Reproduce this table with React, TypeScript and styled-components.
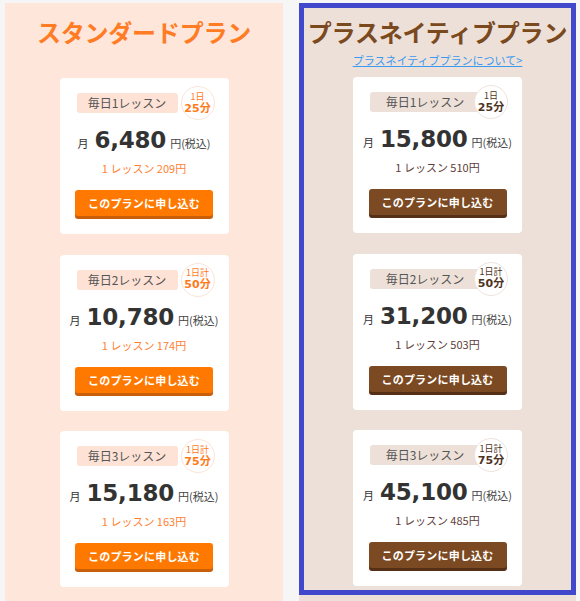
import React from "react";
import styled, { createGlobalStyle } from "styled-components";

const Global = createGlobalStyle`
  html, body { margin: 0; padding: 0; background: #f6f6f6; }
  body { font-family: "Noto Sans CJK JP", sans-serif; }
`;

type Variant = "std" | "plus";

const theme = {
  std: {
    panel: "#ffe6da",
    title: "#ff7b24",
    pill: "#fde2d5",
    ring: "#fbe4d9",
    badgeText: "#ff7a1a",
    perLesson: "#ff7f33",
    btn: "#ff7800",
    btnShadow: "#c95f0b",
  },
  plus: {
    panel: "#ede0d8",
    title: "#7a4a1e",
    pill: "#ede0d8",
    ring: "#eee3dd",
    badgeText: "#4f3322",
    perLesson: "#5e3d3a",
    btn: "#7b4a23",
    btnShadow: "#552f16",
  },
};

const Page = styled.div`
  display: flex;
  align-items: stretch;
  min-height: 100vh;
  box-sizing: border-box;
  padding: 3px 4px 0 5px;
  gap: 16px;
`;

const Column = styled.section<{ $v: Variant }>`
  width: ${(p) => (p.$v === "std" ? "278px" : "277px")};
  background: ${(p) => theme[p.$v].panel};
  display: flex;
  flex-direction: column;
`;

const Frame = styled.div`
  border: 5px solid #4148cc;
  padding: 7px 0 4px;
  display: flex;
  flex-direction: column;
  align-items: center;
`;

const Inner = styled.div`
  padding: 12px 0 0;
  display: flex;
  flex-direction: column;
  align-items: center;
`;

const Title = styled.h2<{ $v: Variant }>`
  margin: 0;
  font-family: "Noto Sans CJK JP", sans-serif;
  font-weight: 700;
  font-size: 24px;
  line-height: 34px;
  color: ${(p) => theme[p.$v].title};
  text-align: center;
  letter-spacing: -0.2px;
`;

const AboutLink = styled.a`
  font-family: "Noto Sans CJK JP", sans-serif;
  font-size: 11px;
  line-height: 15px;
  color: #3a9af0;
  text-decoration: underline;
  margin: 4px 0 9px;
`;

const CardList = styled.div<{ $top: number }>`
  display: flex;
  flex-direction: column;
  gap: 20.5px;
  margin-top: ${(p) => p.$top}px;
`;

const Card = styled.div`
  width: 169px;
  height: 156px;
  box-sizing: border-box;
  background: #fff;
  border-radius: 4px;
  padding-top: 15px;
  display: flex;
  flex-direction: column;
  align-items: center;
`;

const BadgeRow = styled.div`
  position: relative;
  align-self: flex-start;
  margin-left: 17px;
  width: 138px;
  height: 20px;
`;

const Pill = styled.div<{ $v: Variant; $w: number }>`
  width: ${(p) => p.$w}px;
  height: 20px;
  border-radius: 3px;
  background: ${(p) => theme[p.$v].pill};
  color: #555;
  font-size: 12px;
  line-height: 20px;
  text-align: center;
`;

const Circle = styled.div<{ $v: Variant }>`
  position: absolute;
  right: 0;
  top: 50%;
  transform: translateY(-50%);
  width: 34px;
  height: 34px;
  box-sizing: border-box;
  border-radius: 50%;
  background: #fff;
  border: 1px solid ${(p) => theme[p.$v].ring};
  color: ${(p) => theme[p.$v].badgeText};
  display: flex;
  flex-direction: column;
  align-items: center;
  justify-content: center;
`;

const CircleTop = styled.span`
  display: block;
  font-size: 9px;
  line-height: 10px;
  height: 10px;
`;

const CircleBottom = styled.span`
  display: block;
  font-size: 11px;
  font-weight: 700;
  line-height: 12px;
  height: 12px;
  margin-top: 1px;
  font-family: "DejaVu Sans", "Noto Sans CJK JP", sans-serif;
`;

const PriceRow = styled.div`
  margin-top: 11px;
  height: 32px;
  line-height: 32px;
  color: #333;
  white-space: nowrap;
`;

const Month = styled.span`
  font-size: 11px;
  margin-right: 6px;
`;

const Amount = styled.span`
  font-family: "DejaVu Sans", sans-serif;
  font-weight: 700;
  font-size: 23px;
  letter-spacing: -0.2px;
`;

const Yen = styled.span`
  font-size: 11px;
  margin-left: 4px;
  color: #444;
`;

const PerLesson = styled.div<{ $v: Variant }>`
  margin-top: 4px;
  font-size: 11px;
  line-height: 16px;
  color: ${(p) => theme[p.$v].perLesson};
  white-space: pre;
`;

const ApplyButton = styled.button<{ $v: Variant }>`
  margin-top: 14px;
  width: 138px;
  height: 26px;
  border: 0;
  border-radius: 3px;
  background: ${(p) => theme[p.$v].btn};
  box-shadow: 0 3px 0 ${(p) => theme[p.$v].btnShadow};
  color: #fff;
  font-family: "Noto Sans CJK JP", sans-serif;
  font-weight: 700;
  font-size: 11px;
  letter-spacing: 0.2px;
  padding: 0;
  cursor: pointer;
`;

type Plan = { lessons: string; top: string; mins: string; price: string; per: string };

const stdPlans: Plan[] = [
  { lessons: "毎日1レッスン", top: "1日", mins: "25分", price: "6,480", per: "209" },
  { lessons: "毎日2レッスン", top: "1日計", mins: "50分", price: "10,780", per: "174" },
  { lessons: "毎日3レッスン", top: "1日計", mins: "75分", price: "15,180", per: "163" },
];

const plusPlans: Plan[] = [
  { lessons: "毎日1レッスン", top: "1日", mins: "25分", price: "15,800", per: "510" },
  { lessons: "毎日2レッスン", top: "1日計", mins: "50分", price: "31,200", per: "503" },
  { lessons: "毎日3レッスン", top: "1日計", mins: "75分", price: "45,100", per: "485" },
];

function PlanCard({ plan, v }: { plan: Plan; v: Variant }) {
  return (
    <Card>
      <BadgeRow>
        <Pill $v={v} $w={v === "std" ? 101 : 110}>
          {plan.lessons}
        </Pill>
        <Circle $v={v}>
          <CircleTop>{plan.top}</CircleTop>
          <CircleBottom>{plan.mins}</CircleBottom>
        </Circle>
      </BadgeRow>
      <PriceRow>
        <Month>月</Month>
        <Amount>{plan.price}</Amount>
        <Yen>円(税込)</Yen>
      </PriceRow>
      <PerLesson $v={v}>{`1 レッスン ${plan.per}円`}</PerLesson>
      <ApplyButton $v={v}>このプランに申し込む</ApplyButton>
    </Card>
  );
}

export default function App() {
  return (
    <>
      <Global />
      <Page>
        <Column $v="std">
          <Inner>
            <Title $v="std">スタンダードプラン</Title>
            <CardList $top={29}>
              {stdPlans.map((p) => (
                <PlanCard key={p.price} plan={p} v="std" />
              ))}
            </CardList>
          </Inner>
        </Column>
        <Column $v="plus">
          <Frame>
            <Title $v="plus">プラスネイティブプラン</Title>
            <AboutLink href="#">プラスネイティブプランについて&gt;</AboutLink>
            <CardList $top={0}>
              {plusPlans.map((p) => (
                <PlanCard key={p.price} plan={p} v="plus" />
              ))}
            </CardList>
          </Frame>
        </Column>
      </Page>
    </>
  );
}
